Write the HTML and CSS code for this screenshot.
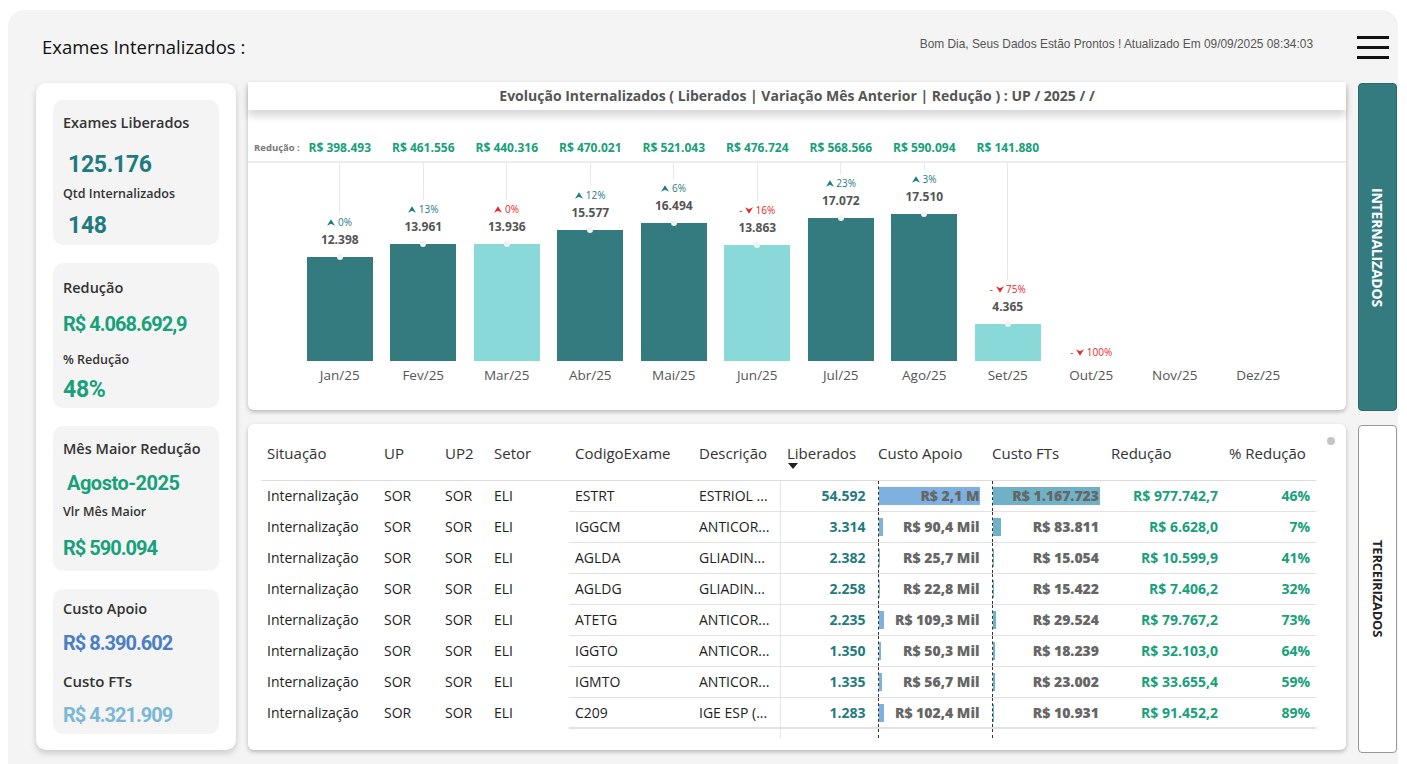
FILE: index.html
```html
<!DOCTYPE html>
<html lang="pt-BR">
<head>
    <meta charset="UTF-8">
    <title>Exames Internalizados</title>
    <link rel="stylesheet" href="styles.css">
</head>
<body>

<div class="frame">
    <header class="topbar">
        <h1>Exames Internalizados :</h1>
        <div class="topbar-right">
            <span class="updated">Bom Dia, Seus Dados Estão Prontos ! Atualizado Em 09/09/2025 08:34:03</span>
            <div class="menu-btn"><span></span><span></span><span></span></div>
        </div>
    </header>

    <main class="board">
        <!-- KPI column -->
        <aside class="kpis">
            <div class="kpi kpi-qty">
                <div class="kpi-label">Exames Liberados</div>
                <div class="kpi-value teal indent">125.176</div>
                <div class="kpi-sub">Qtd Internalizados</div>
                <div class="kpi-value teal indent">148</div>
            </div>
            <div class="kpi kpi-red">
                <div class="kpi-label">Redução</div>
                <div class="kpi-value green small">R$ 4.068.692,9</div>
                <div class="kpi-sub">% Redução</div>
                <div class="kpi-value green">48%</div>
            </div>
            <div class="kpi kpi-month">
                <div class="kpi-label">Mês Maior Redução</div>
                <div class="kpi-value green month">Agosto-2025</div>
                <div class="kpi-sub">Vlr Mês Maior</div>
                <div class="kpi-value green small">R$ 590.094</div>
            </div>
            <div class="kpi kpi-cost">
                <div class="kpi-label">Custo Apoio</div>
                <div class="kpi-value blue small">R$ 8.390.602</div>
                <div class="kpi-label">Custo FTs</div>
                <div class="kpi-value lightblue small">R$ 4.321.909</div>
            </div>
        </aside>

        <!-- monthly chart -->
        <section class="chart-card">
            <div class="chart-title">Evolução Internalizados ( Liberados | Variação Mês Anterior | Redução ) : UP / 2025 / /</div>

            <div class="reduction-row">
                <span class="reduction-label">Redução :</span>
                <div class="months">
                    <span>R$ 398.493</span>
                    <span>R$ 461.556</span>
                    <span>R$ 440.316</span>
                    <span>R$ 470.021</span>
                    <span>R$ 521.043</span>
                    <span>R$ 476.724</span>
                    <span>R$ 568.566</span>
                    <span>R$ 590.094</span>
                    <span>R$ 141.880</span>
                    <span></span>
                    <span></span>
                    <span></span>
                </div>
            </div>

            <div class="plot months">
                <div class="col">
                    <div class="stem"></div>
                    <div class="var"><svg viewBox="0 0 10 8"><path d="M5 0L10 8L5 5.5L0 8Z"/></svg> 0%</div>
                    <div class="val">12.398</div>
                    <div class="bar" style="height:104px"></div>
                </div>
                <div class="col">
                    <div class="stem"></div>
                    <div class="var"><svg viewBox="0 0 10 8"><path d="M5 0L10 8L5 5.5L0 8Z"/></svg> 13%</div>
                    <div class="val">13.961</div>
                    <div class="bar" style="height:117px"></div>
                </div>
                <div class="col">
                    <div class="stem"></div>
                    <div class="var red"><svg viewBox="0 0 10 8"><path d="M5 0L10 8L5 5.5L0 8Z"/></svg> 0%</div>
                    <div class="val">13.936</div>
                    <div class="bar light" style="height:117px"></div>
                </div>
                <div class="col">
                    <div class="stem"></div>
                    <div class="var"><svg viewBox="0 0 10 8"><path d="M5 0L10 8L5 5.5L0 8Z"/></svg> 12%</div>
                    <div class="val">15.577</div>
                    <div class="bar" style="height:131px"></div>
                </div>
                <div class="col">
                    <div class="stem"></div>
                    <div class="var"><svg viewBox="0 0 10 8"><path d="M5 0L10 8L5 5.5L0 8Z"/></svg> 6%</div>
                    <div class="val">16.494</div>
                    <div class="bar" style="height:138px"></div>
                </div>
                <div class="col">
                    <div class="stem"></div>
                    <div class="var red">- <svg viewBox="0 0 10 8"><path d="M5 8L10 0L5 2.5L0 0Z"/></svg> 16%</div>
                    <div class="val">13.863</div>
                    <div class="bar light" style="height:116px"></div>
                </div>
                <div class="col">
                    <div class="stem"></div>
                    <div class="var"><svg viewBox="0 0 10 8"><path d="M5 0L10 8L5 5.5L0 8Z"/></svg> 23%</div>
                    <div class="val">17.072</div>
                    <div class="bar" style="height:143px"></div>
                </div>
                <div class="col">
                    <div class="stem"></div>
                    <div class="var"><svg viewBox="0 0 10 8"><path d="M5 0L10 8L5 5.5L0 8Z"/></svg> 3%</div>
                    <div class="val">17.510</div>
                    <div class="bar" style="height:147px"></div>
                </div>
                <div class="col">
                    <div class="stem"></div>
                    <div class="var red">- <svg viewBox="0 0 10 8"><path d="M5 8L10 0L5 2.5L0 0Z"/></svg> 75%</div>
                    <div class="val">4.365</div>
                    <div class="bar light" style="height:37px"></div>
                </div>
                <div class="col">
                    <div class="var red">- <svg viewBox="0 0 10 8"><path d="M5 8L10 0L5 2.5L0 0Z"/></svg> 100%</div>
                </div>
                <div class="col"></div>
                <div class="col"></div>
            </div>

            <div class="axis months">
                <span>Jan/25</span><span>Fev/25</span><span>Mar/25</span><span>Abr/25</span>
                <span>Mai/25</span><span>Jun/25</span><span>Jul/25</span><span>Ago/25</span>
                <span>Set/25</span><span>Out/25</span><span>Nov/25</span><span>Dez/25</span>
            </div>
        </section>

        <!-- view switch -->
        <button class="side-btn active">INTERNALIZADOS</button>

        <!-- detail table -->
        <section class="table-card">
            <span class="scroll-thumb"></span>
            <table class="grid">
                <colgroup>
                    <col style="width:117px"><col style="width:61px"><col style="width:49px"><col style="width:81px">
                    <col style="width:124px"><col style="width:87px"><col style="width:98px"><col style="width:114px">
                    <col style="width:113px"><col style="width:118px"><col style="width:93px">
                </colgroup>
                <thead>
                    <tr>
                        <th>Situação</th>
                        <th>UP</th>
                        <th>UP2</th>
                        <th>Setor</th>
                        <th>CodigoExame</th>
                        <th>Descrição</th>
                        <th class="sorted">Liberados<i class="sort-arrow"></i></th>
                        <th class="flush">Custo Apoio</th>
                        <th class="flush">Custo FTs</th>
                        <th>Redução</th>
                        <th>% Redução</th>
                    </tr>
                </thead>
                <tbody>
                    <tr>
                        <td>Internalização</td><td>SOR</td><td>SOR</td><td>ELI</td>
                        <td class="ln">ESTRT</td><td class="ln">ESTRIOL ...</td>
                        <td class="ln num qty">54.592</td>
                        <td class="ln num cost"><span class="databar apoio" style="width:101px"></span><b>R$ 2,1 M</b></td>
                        <td class="ln num cost fts"><span class="databar ft" style="width:107px"></span><b>R$ 1.167.723</b></td>
                        <td class="ln num good">R$ 977.742,7</td>
                        <td class="ln num good">46%</td>
                    </tr>
                    <tr>
                        <td>Internalização</td><td>SOR</td><td>SOR</td><td>ELI</td>
                        <td class="ln">IGGCM</td><td class="ln">ANTICOR...</td>
                        <td class="ln num qty">3.314</td>
                        <td class="ln num cost"><span class="databar apoio" style="width:4px"></span><b>R$ 90,4 Mil</b></td>
                        <td class="ln num cost fts"><span class="databar ft" style="width:8px"></span><b>R$ 83.811</b></td>
                        <td class="ln num good">R$ 6.628,0</td>
                        <td class="ln num good">7%</td>
                    </tr>
                    <tr>
                        <td>Internalização</td><td>SOR</td><td>SOR</td><td>ELI</td>
                        <td class="ln">AGLDA</td><td class="ln">GLIADIN...</td>
                        <td class="ln num qty">2.382</td>
                        <td class="ln num cost"><span class="databar apoio" style="width:1px"></span><b>R$ 25,7 Mil</b></td>
                        <td class="ln num cost fts"><span class="databar ft" style="width:1px"></span><b>R$ 15.054</b></td>
                        <td class="ln num good">R$ 10.599,9</td>
                        <td class="ln num good">41%</td>
                    </tr>
                    <tr>
                        <td>Internalização</td><td>SOR</td><td>SOR</td><td>ELI</td>
                        <td class="ln">AGLDG</td><td class="ln">GLIADIN...</td>
                        <td class="ln num qty">2.258</td>
                        <td class="ln num cost"><span class="databar apoio" style="width:1px"></span><b>R$ 22,8 Mil</b></td>
                        <td class="ln num cost fts"><span class="databar ft" style="width:1px"></span><b>R$ 15.422</b></td>
                        <td class="ln num good">R$ 7.406,2</td>
                        <td class="ln num good">32%</td>
                    </tr>
                    <tr>
                        <td>Internalização</td><td>SOR</td><td>SOR</td><td>ELI</td>
                        <td class="ln">ATETG</td><td class="ln">ANTICOR...</td>
                        <td class="ln num qty">2.235</td>
                        <td class="ln num cost"><span class="databar apoio" style="width:5px"></span><b>R$ 109,3 Mil</b></td>
                        <td class="ln num cost fts"><span class="databar ft" style="width:3px"></span><b>R$ 29.524</b></td>
                        <td class="ln num good">R$ 79.767,2</td>
                        <td class="ln num good">73%</td>
                    </tr>
                    <tr>
                        <td>Internalização</td><td>SOR</td><td>SOR</td><td>ELI</td>
                        <td class="ln">IGGTO</td><td class="ln">ANTICOR...</td>
                        <td class="ln num qty">1.350</td>
                        <td class="ln num cost"><span class="databar apoio" style="width:2px"></span><b>R$ 50,3 Mil</b></td>
                        <td class="ln num cost fts"><span class="databar ft" style="width:2px"></span><b>R$ 18.239</b></td>
                        <td class="ln num good">R$ 32.103,0</td>
                        <td class="ln num good">64%</td>
                    </tr>
                    <tr>
                        <td>Internalização</td><td>SOR</td><td>SOR</td><td>ELI</td>
                        <td class="ln">IGMTO</td><td class="ln">ANTICOR...</td>
                        <td class="ln num qty">1.335</td>
                        <td class="ln num cost"><span class="databar apoio" style="width:3px"></span><b>R$ 56,7 Mil</b></td>
                        <td class="ln num cost fts"><span class="databar ft" style="width:2px"></span><b>R$ 23.002</b></td>
                        <td class="ln num good">R$ 33.655,4</td>
                        <td class="ln num good">59%</td>
                    </tr>
                    <tr>
                        <td>Internalização</td><td>SOR</td><td>SOR</td><td>ELI</td>
                        <td class="ln">C209</td><td class="ln">IGE ESP (...</td>
                        <td class="ln num qty">1.283</td>
                        <td class="ln num cost"><span class="databar apoio" style="width:5px"></span><b>R$ 102,4 Mil</b></td>
                        <td class="ln num cost fts"><span class="databar ft" style="width:1px"></span><b>R$ 10.931</b></td>
                        <td class="ln num good">R$ 91.452,2</td>
                        <td class="ln num good">89%</td>
                    </tr>
                    <tr class="filler">
                        <td></td><td></td><td></td><td></td><td></td><td></td>
                        <td class="qty"></td><td class="cost"></td><td class="cost"></td><td></td><td></td>
                    </tr>
                </tbody>
            </table>
        </section>

        <button class="side-btn">TERCEIRIZADOS</button>
    </main>
</div>

</body>
</html>
```

FILE: styles.css
```css
:root {
    --frame-bg: #f4f4f4;
    --teal: #347b80;
    --teal-text: #1f7b80;
    --teal-light: #89d9d9;
    --green: #17a07a;
    --red: #e8262b;
    --blue: #4a80c2;
    --light-blue: #7ab8d6;
    --ui: "Open Sans", "Noto Sans", sans-serif;
    --num: "Roboto", "Liberation Sans", sans-serif;
}

* {
    box-sizing: border-box;
}

body {
    margin: 0;
    background: #ffffff;
    font-family: var(--ui);
    color: #333;
    overflow: hidden;
}

.frame {
    margin: 10px 9px 0 8px;
    height: 780px;
    background: var(--frame-bg);
    border-radius: 16px;
    padding: 0 1px 0 28px;
}

/* header */
.topbar {
    height: 72px;
    display: flex;
    align-items: center;
    justify-content: space-between;
}

.topbar h1 {
    margin: 0 0 0 6px;
    font-size: 18.5px;
    font-weight: 400;
    color: #111;
}

.topbar-right {
    display: flex;
    align-items: center;
    gap: 44px;
    padding-right: 8px;
}

.updated {
    font-family: "Liberation Sans", Arial, sans-serif;
    font-size: 11.9px;
    color: #555;
    margin-top: -4px;
}

.menu-btn {
    width: 32px;
    display: flex;
    flex-direction: column;
    gap: 7px;
    margin-top: 2px;
}

.menu-btn span {
    height: 3px;
    background: #111;
}

/* main grid */
.board {
    display: grid;
    grid-template-columns: 200px 1098px 39px;
    grid-template-rows: 328px 326px;
    column-gap: 12px;
    row-gap: 14px;
}

.kpis {
    grid-row: 1 / span 2;
    margin-top: 1px;
    background: #fff;
    border-radius: 10px;
    box-shadow: 0 3px 6px rgba(0,0,0,0.18);
    padding: 17px 17px 0;
    display: flex;
    flex-direction: column;
    gap: 18px;
}

/* each card: spacing above label / value / sub label / value */
.kpi {
    --pad: 12px;
    --gap1: 9px;
    --gap2: 6px;
    --gap3: 7px;
    height: 145px;
    background: var(--frame-bg);
    border-radius: 10px;
    padding: var(--pad) 0 0 10px;
}

.kpi-qty   { --pad: 12px; --gap1: 16px; --gap2: 4px;  --gap3: 7px; }
.kpi-red   { --pad: 14px; --gap1: 10px; --gap2: 11px; --gap3: 5px; }
.kpi-month { --pad: 12px; --gap1: 8px;  --gap2: 4px;  --gap3: 11px; }
.kpi-cost  { --pad: 9px;  --gap1: 8px;  --gap2: 12px; --gap3: 8px; }

.kpi-label {
    font-size: 15px;
    font-weight: 600;
    line-height: 22px;
    color: #333;
}

.kpi-label:first-child {
    font-size: 14.5px;
}

.kpi-sub {
    font-size: 12.5px;
    font-weight: 600;
    line-height: 20px;
    color: #333;
}

.kpi-value {
    font-family: var(--num);
    font-weight: 700;
    font-size: 23px;
    line-height: 30px;
    letter-spacing: -0.3px;
}

.kpi > :nth-child(2) { margin-top: var(--gap1); }
.kpi > :nth-child(3) { margin-top: var(--gap2); }
.kpi > :nth-child(4) { margin-top: var(--gap3); }

.kpi-value.small {
    font-size: 20px;
    letter-spacing: -1px;
}

.kpi-value.indent {
    padding-left: 5px;
}

.kpi-value.month {
    font-size: 20px;
    letter-spacing: -0.5px;
    padding-left: 4px;
}

.teal { color: var(--teal-text); }
.green { color: var(--green); }
.blue { color: var(--blue); }
.lightblue { color: var(--light-blue); }

/* chart */
.chart-card {
    background: #fff;
    border-radius: 0 0 6px 6px;
    box-shadow: 0 2px 4px rgba(0,0,0,0.25);
    position: relative;
}

.chart-title {
    height: 28px;
    line-height: 28px;
    text-align: center;
    font-size: 14px;
    font-weight: 700;
    color: #555;
    background: #fff;
    box-shadow: 0 6px 8px rgba(0,0,0,0.16);
    position: relative;
}

.months {
    display: flex;
}

.months > * {
    flex: 1;
    text-align: center;
}

.reduction-row {
    display: flex;
    align-items: center;
    height: 30px;
    margin-top: 23px;
    padding-left: 6px;
    border-bottom: 2px solid #ececec;
}

.reduction-label {
    width: 44px;
    flex: none;
    white-space: nowrap;
    font-size: 9.5px;
    font-weight: 700;
    color: #777;
}

.reduction-row .months {
    width: 1002px;
    font-size: 12px;
    font-weight: 700;
    color: var(--green);
}

.plot {
    height: 198px;
    width: 1002px;
    margin-left: 50px;
}

.col {
    display: flex;
    flex-direction: column;
    justify-content: flex-end;
    align-items: center;
}

.stem {
    flex: 1;
    width: 1px;
    background: #e8e8e8;
}

.var {
    font-size: 10px;
    line-height: 18px;
    color: var(--teal-text);
    white-space: nowrap;
}

.var.red {
    color: var(--red);
}

.var svg {
    width: 8px;
    height: 7px;
    fill: currentColor;
    vertical-align: 0;
}

.val {
    font-size: 12px;
    font-weight: 700;
    line-height: 18px;
    padding-bottom: 8px;
    color: #555;
}

.bar {
    width: 66px;
    background: var(--teal);
    position: relative;
}

.bar.light {
    background: var(--teal-light);
}

.bar::after {
    content: "";
    position: absolute;
    left: 50%;
    top: -3px;
    width: 6px;
    height: 6px;
    margin-left: -3px;
    border-radius: 50%;
    background: #f2f2f2;
}

.axis {
    width: 1002px;
    margin-left: 50px;
    height: 28px;
    line-height: 28px;
    font-size: 13.5px;
    color: #555;
}

/* side switch buttons */
.side-btn {
    writing-mode: vertical-rl;
    font-family: var(--ui);
    font-size: 13px;
    font-weight: 700;
    border-radius: 4px;
    border: 1px solid #999;
    background: #fff;
    color: #222;
    padding: 0;
    height: 328px;
    margin-top: 1px;
    letter-spacing: -0.2px;
}

.side-btn.active {
    background: var(--teal);
    border-color: #2c686c;
    color: #fff;
    font-size: 14px;
    margin-top: 1px;
}

/* detail table */
.table-card {
    background: #fff;
    border-radius: 6px;
    box-shadow: 0 2px 4px rgba(0,0,0,0.25);
    padding: 12px 30px 0 13px;
    position: relative;
}

.scroll-thumb {
    position: absolute;
    right: 11px;
    top: 13px;
    width: 8px;
    height: 8px;
    border-radius: 50%;
    background: #c4c4c4;
}

.grid {
    width: 1055px;
    border-collapse: collapse;
    table-layout: fixed;
    font-size: 14px;
    color: #222;
}

.grid th {
    height: 44px;
    padding: 7px 0 0 6px;
    text-align: left;
    vertical-align: top;
    font-size: 15px;
    font-weight: 400;
    line-height: 21px;
    color: #333;
    border-bottom: 1px solid #dcdcdc;
    white-space: nowrap;
}

.grid th.sorted {
    padding-left: 7px;
}

.grid th.flush {
    padding-left: 0;
}

.sort-arrow {
    display: block;
    width: 0;
    height: 0;
    margin: -1px 0 0 1px;
    border-left: 5px solid transparent;
    border-right: 5px solid transparent;
    border-top: 6px solid #222;
}

.grid td {
    height: 31px;
    padding: 0 0 0 6px;
    white-space: nowrap;
    overflow: hidden;
}

.grid td.ln {
    border-bottom: 1px solid #e2e2e2;
}

.grid td.num {
    text-align: right;
    font-weight: 700;
    padding: 0 6px 0 0;
}

.grid td.qty {
    border-left: 1px solid #e4e4e4;
    color: var(--teal-text);
    padding-right: 12px;
}

.grid td.cost {
    border-left: 1px dashed #333;
    color: #666;
    position: relative;
    padding-right: 12px;
}

.grid td.cost.fts {
    padding-right: 6px;
}

.grid td.good {
    color: var(--green);
    padding-right: 5px;
}

.grid td.good:last-child {
    padding-right: 6px;
}

.cost b {
    position: relative;
}

.databar {
    position: absolute;
    left: 0;
    top: 6px;
    height: 18px;
}

.databar.apoio {
    background: #7eb1e0;
}

.databar.ft {
    background: #6fb2c8;
}

.grid tr.filler td {
    height: 10px;
    border-bottom: 0;
}

.grid tr:nth-last-child(2) td.ln {
    border-bottom: 2px solid #e2e2e2;
}
```
